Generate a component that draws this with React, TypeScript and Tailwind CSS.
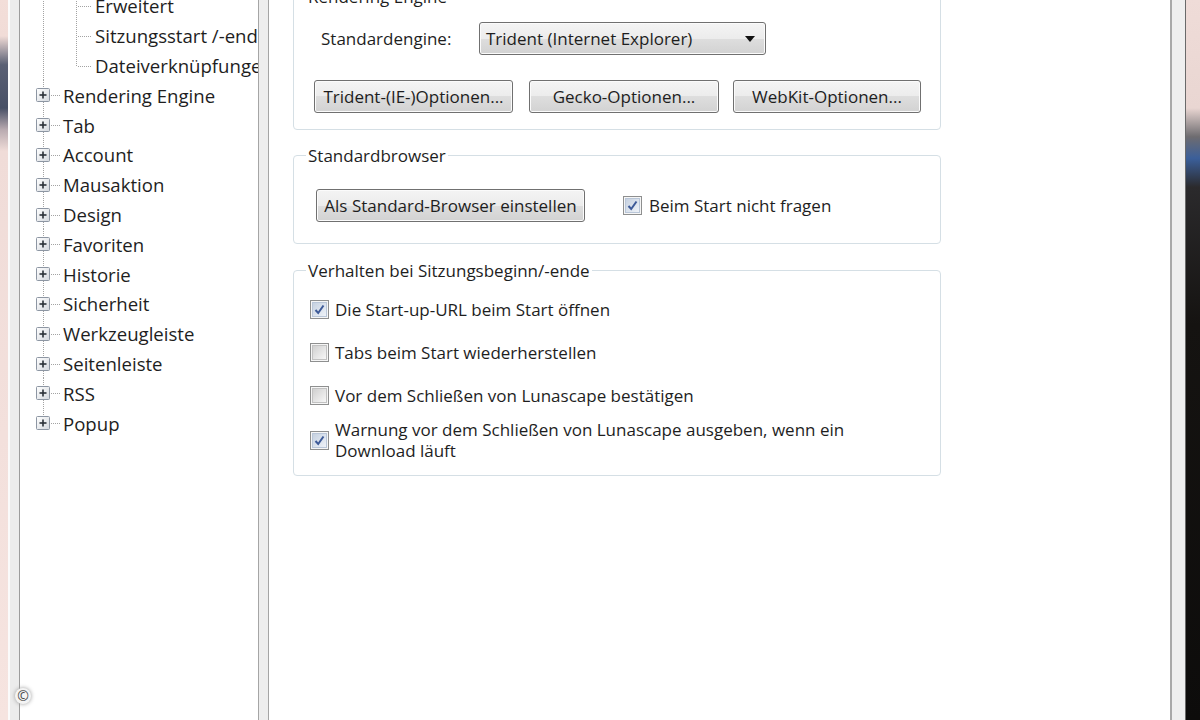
import React from "react";

const rootItems = [
  "Rendering Engine",
  "Tab",
  "Account",
  "Mausaktion",
  "Design",
  "Favoriten",
  "Historie",
  "Sicherheit",
  "Werkzeugleiste",
  "Seitenleiste",
  "RSS",
  "Popup",
];

const childItems = ["Erweitert", "Sitzungsstart /-ende", "Dateiverknüpfungen"];

function ChildLines({ last }: { last: boolean }) {
  return (
    <svg width="75" height="29.8" className="shrink-0">
      <line x1="23.5" y1="0" x2="23.5" y2="29.8" stroke="#a3a3a3" strokeDasharray="1 1" />
      <line x1="56.5" y1="0" x2="56.5" y2={last ? 15 : 29.8} stroke="#a3a3a3" strokeDasharray="1 1" />
      <line x1="58" y1="15.5" x2="71" y2="15.5" stroke="#a3a3a3" strokeDasharray="1 1" />
    </svg>
  );
}

function RootLines({ last }: { last: boolean }) {
  return (
    <svg width="43" height="29.8" className="shrink-0">
      <defs>
        <linearGradient id="pbox" x1="0" y1="0" x2="1" y2="1">
          <stop offset="0" stopColor="#ffffff" />
          <stop offset="1" stopColor="#d4d8de" />
        </linearGradient>
      </defs>
      <line x1="23.5" y1="0" x2="23.5" y2={last ? 15 : 29.8} stroke="#a3a3a3" strokeDasharray="1 1" />
      <line x1="31" y1="15.5" x2="41" y2="15.5" stroke="#a3a3a3" strokeDasharray="1 1" />
      <rect x="16.5" y="8.5" width="13" height="13" fill="url(#pbox)" stroke="#8d96a3" rx="1" />
      <line x1="19.5" y1="15" x2="26.5" y2="15" stroke="#2a3038" strokeWidth="1.6" />
      <line x1="23" y1="11.5" x2="23" y2="18.5" stroke="#2a3038" strokeWidth="1.6" />
    </svg>
  );
}

function Check({ checked }: { checked: boolean }) {
  return (
    <span className="flex h-[19px] w-[19px] shrink-0 items-center justify-center border border-[#8e8f8f] bg-[#f6f6f6]">
      {checked ? (
        <span className="flex h-[15px] w-[15px] items-center justify-center border border-[#b9c6d8] bg-[linear-gradient(135deg,#c6d1e0,#eef2f8)]">
          <svg width="13" height="13" viewBox="0 0 13 13">
            <path d="M2.5 7 L5.2 10 L10.5 2.5" fill="none" stroke="#3d5a98" strokeWidth="2" />
          </svg>
        </span>
      ) : (
        <span className="h-[15px] w-[15px] border border-[#c2c2c2] bg-[linear-gradient(135deg,#d0d0d0,#f7f7f7)]" />
      )}
    </span>
  );
}

const face =
  "flex h-[33px] items-center rounded-[3px] border border-[#707070] bg-[linear-gradient(to_bottom,#f4f4f4_0%,#ececec_50%,#dedede_50%,#d2d2d2_100%)] shadow-[inset_0_0_0_1px_#fbfbfb] whitespace-nowrap";
const btn = face + " justify-center";

export default function App() {
  return (
    <div className="relative flex h-[720px] w-[1200px] overflow-hidden font-['Open_Sans','Noto_Sans',sans-serif] text-[17px] leading-[23px] text-[#1e1e1e]">
      {/* desktop behind, left */}
      <div className="w-[8px] shrink-0 bg-[linear-gradient(to_bottom,#f3ded9_0%,#f1dcd7_5%,#5a6074_9%,#485066_15%,#b8aab0_18%,#f0dcd8_21%,#f6e4e0_100%)]" />
      <div className="w-[12px] shrink-0 border-l-2 border-r border-l-[#fbfbfb] border-r-[#9c9c9c] bg-[#ececec]" />

      {/* tree */}
      <div className="w-[239px] shrink-0 overflow-hidden border-r border-[#a5a5a5] bg-white text-[18.6px]">
        <div className="-mt-[9px]">
          {childItems.map((t, i) => (
            <div key={t} className="flex h-[29.8px] items-center whitespace-nowrap">
              <ChildLines last={i === childItems.length - 1} />
              <span>{t}</span>
            </div>
          ))}
          {rootItems.map((t, i) => (
            <div key={t} className="flex h-[29.8px] items-center whitespace-nowrap">
              <RootLines last={i === rootItems.length - 1} />
              <span>{t}</span>
            </div>
          ))}
        </div>
      </div>

      <div className="w-[10px] shrink-0 border-r border-[#a5a5a5] bg-[#eeeeee]" />

      {/* options panel */}
      <div className="w-[901px] shrink-0 overflow-hidden bg-white pl-[24px]">
        <fieldset className="-mt-[15px] w-[648px] rounded-[4px] border border-[#d5dfe5]">
          <legend className="ml-[12px] px-[2px]">Rendering Engine</legend>
          <div className="flex items-center pl-[27px] pt-[14px]">
            <span className="w-[158px]">Standardengine:</span>
            <div className={face + " w-[287px] justify-between pl-[6px] pr-[9px]"}>
              <span>Trident (Internet Explorer)</span>
              <svg width="12" height="8" viewBox="0 0 12 8">
                <path d="M1 1 H11 L6 7 Z" fill="#111" />
              </svg>
            </div>
          </div>
          <div className="flex pl-[20px] pt-[25px] pb-[16px]">
            <div className={btn + " w-[199px]"}>Trident-(IE-)Optionen...</div>
            <div className={btn + " ml-[16px] w-[190px]"}>Gecko-Optionen...</div>
            <div className={btn + " ml-[14px] w-[188px]"}>WebKit-Optionen...</div>
          </div>
        </fieldset>

        <fieldset className="mt-[14px] w-[648px] rounded-[4px] border border-[#d5dfe5]">
          <legend className="ml-[12px] px-[2px]">Standardbrowser</legend>
          <div className="flex items-center pl-[22px] pt-[22px] pb-[21px]">
            <div className={btn + " w-[269px]"}>Als Standard-Browser einstellen</div>
            <div className="ml-[38px] flex items-center gap-[7px]">
              <Check checked />
              <span>Beim Start nicht fragen</span>
            </div>
          </div>
        </fieldset>

        <fieldset className="mt-[15px] w-[648px] rounded-[4px] border border-[#d5dfe5]">
          <legend className="ml-[12px] px-[2px]">Verhalten bei Sitzungsbeginn/-ende</legend>
          <div className="flex flex-col pl-[16px] pt-[17px] pb-[14px] leading-[21px]">
            <div className="flex items-center gap-[6px]">
              <Check checked />
              <span>Die Start-up-URL beim Start öffnen</span>
            </div>
            <div className="mt-[22px] flex items-center gap-[6px]">
              <Check checked={false} />
              <span>Tabs beim Start wiederherstellen</span>
            </div>
            <div className="mt-[22px] flex items-center gap-[6px]">
              <Check checked={false} />
              <span>Vor dem Schließen von Lunascape bestätigen</span>
            </div>
            <div className="mt-[13px] flex items-center gap-[6px]">
              <Check checked />
              <span>
                Warnung vor dem Schließen von Lunascape ausgeben, wenn ein
                <br />
                Download läuft
              </span>
            </div>
          </div>
        </fieldset>
      </div>

      <div className="w-[16px] shrink-0 border-l-2 border-r border-l-[#a9a9a9] border-r-[#6a6a6a] bg-[#efefef]" />
      {/* desktop behind, right */}
      <div className="flex-1 bg-[linear-gradient(to_bottom,#efdcd8_0%,#e9d6d2_15%,#6e6c70_19%,#3b5f9a_22%,#2b2a2c_26%,#151311_45%,#0d0c0b_100%)]" />

      <span className="absolute left-[15px] top-[688px] flex h-[16px] w-[16px] items-center justify-center rounded-full bg-[#f4f4f4] text-[14px] leading-none text-[#4a4a4a] shadow-[0_0_4px_#9a9a9a]">
        ©
      </span>
    </div>
  );
}
